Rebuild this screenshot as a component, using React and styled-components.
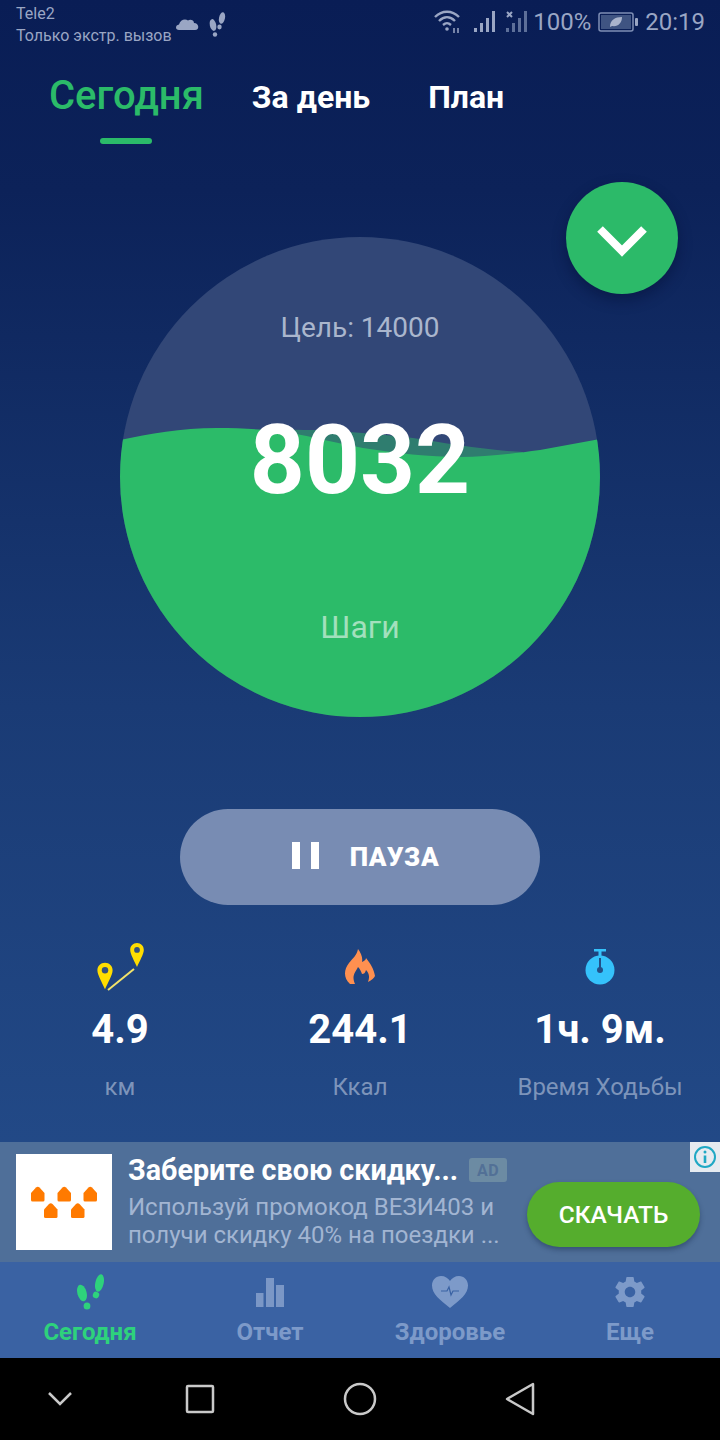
import React from 'react'
import styled, { createGlobalStyle } from 'styled-components'

const GlobalStyle = createGlobalStyle`
  html, body { margin: 0; padding: 0; background: #000; }
  * { box-sizing: border-box; }
  body { font-family: Roboto, "Noto Sans", sans-serif; }
`

const Page = styled.div`
  width: 720px;
  height: 1440px;
  display: flex;
  flex-direction: column;
  overflow: hidden;
`

const Screen = styled.div`
  flex: 1;
  display: flex;
  flex-direction: column;
  background: linear-gradient(180deg, #091d55 0%, #0c2259 14%, #1a3b75 52%, #26508f 100%);
`

const StatusBar = styled.div`
  height: 46px;
  padding: 3px 15px 0 16px;
  display: flex;
  justify-content: space-between;
  color: #9aa6c4;
`

const CarrierGroup = styled.div`
  display: flex;
  align-items: flex-start;
`

const Carrier = styled.div`
  font-size: 16px;
  line-height: 22px;
  white-space: nowrap;
`

const StatusIcons = styled.div`
  display: flex;
  align-items: center;
  gap: 3px;
  height: 44px;
  margin-top: -3px;
  font-size: 24px;
  white-space: nowrap;
`

const Tabs = styled.div`
  display: flex;
  align-items: flex-start;
  padding-left: 49px;
  height: 104px;
`

const Tab = styled.div`
  display: flex;
  flex-direction: column;
  align-items: center;
  margin-left: ${p => p.$gap || 0}px;
  margin-top: ${p => (p.$active ? 30 : 35)}px;
  font-size: ${p => (p.$active ? 40 : 32)}px;
  line-height: 1;
  font-weight: ${p => (p.$active ? 500 : 700)};
  color: ${p => (p.$active ? '#2bbb69' : '#fff')};
`

const TabMarker = styled.div`
  width: 52px;
  height: 6px;
  margin-top: 22px;
  border-radius: 3px;
  background: #2bbb69;
`

const Hero = styled.div`
  position: relative;
  display: flex;
  justify-content: center;
  padding-top: 87px;
`

const Dial = styled.div`
  position: relative;
  width: 480px;
  height: 480px;
  border-radius: 50%;
  overflow: hidden;
  background: #324777;
  display: flex;
  flex-direction: column;
  align-items: center;
`

const WaveLayer = styled.svg`
  position: absolute;
  left: 0;
  top: 0;
`

const Goal = styled.div`
  position: relative;
  margin-top: 73px;
  font-size: 28px;
  line-height: 36px;
  color: #aab6cd;
`

const StepCount = styled.div`
  position: relative;
  margin-top: 58px;
  font-size: 96px;
  line-height: 112px;
  font-weight: 700;
  color: #fff;
`

const StepLabel = styled.div`
  position: relative;
  margin-top: 91px;
  font-size: 32px;
  line-height: 40px;
  color: #a2e0bd;
`

const CollapseButton = styled.div`
  position: absolute;
  right: 42px;
  top: 32px;
  width: 112px;
  height: 112px;
  padding-top: 5px;
  border-radius: 50%;
  background: #2cba69;
  box-shadow: 0 6px 14px rgba(4, 14, 50, 0.45);
  display: flex;
  align-items: center;
  justify-content: center;
`

const PauseButton = styled.div`
  align-self: center;
  width: 360px;
  height: 96px;
  margin-top: 92px;
  padding-left: 11px;
  border-radius: 48px;
  background: #788cb3;
  display: flex;
  align-items: center;
  justify-content: center;
  gap: 31px;
  color: #fff;
  font-size: 26px;
  font-weight: 900;
  letter-spacing: 0.6px;
`

const PauseBars = styled.div`
  display: flex;
  gap: 11px;
  margin-top: -3px;
`

const PauseBar = styled.div`
  width: 8px;
  height: 27px;
  background: #fff;
`

const Stats = styled.div`
  display: grid;
  grid-template-columns: repeat(3, 240px);
  margin-top: 34px;
`

const Stat = styled.div`
  display: flex;
  flex-direction: column;
  align-items: center;
`

const StatIcon = styled.div`
  height: 56px;
  display: flex;
  align-items: center;
  justify-content: center;
`

const StatValue = styled.div`
  margin-top: 11px;
  font-size: 40px;
  line-height: 48px;
  font-weight: 700;
  color: #fff;
`

const StatLabel = styled.div`
  margin-top: 18px;
  font-size: 24px;
  line-height: 30px;
  color: #7d94ba;
  white-space: nowrap;
`

const AdBanner = styled.div`
  position: relative;
  height: 120px;
  margin-top: auto;
  padding: 12px 20px 12px 16px;
  display: flex;
  align-items: center;
  background: #4f6f99;
`

const AdImage = styled.div`
  width: 96px;
  height: 96px;
  flex: none;
  background: #fff;
  display: flex;
  align-items: center;
  justify-content: center;
`

const AdText = styled.div`
  flex: 1;
  margin-left: 16px;
  min-width: 0;
`

const AdTitleRow = styled.div`
  display: flex;
  align-items: center;
  gap: 11px;
  height: 34px;
  margin-top: -2px;
`

const AdTitle = styled.div`
  font-size: 28.7px;
  font-weight: 700;
  color: #fff;
  white-space: nowrap;
`

const AdBadge = styled.div`
  width: 38px;
  height: 24px;
  border-radius: 3px;
  background: #6c8ba3;
  color: #527096;
  font-size: 16px;
  font-weight: 700;
  letter-spacing: 0.5px;
  display: flex;
  align-items: center;
  justify-content: center;
`

const AdBody = styled.div`
  margin-top: 6px;
  font-size: 24px;
  line-height: 28px;
  color: #a2b5d2;
  white-space: nowrap;
`

const AdButton = styled.div`
  flex: none;
  width: 173px;
  height: 65px;
  margin-top: 24px;
  border-radius: 33px;
  background: #55ad2d;
  box-shadow: 0 3px 5px rgba(20, 40, 70, 0.4);
  color: #fff;
  font-size: 24.5px;
  font-weight: 500;
  display: flex;
  align-items: center;
  justify-content: center;
`

const AdInfo = styled.div`
  position: absolute;
  right: 0;
  top: 0;
  width: 30px;
  height: 30px;
  background: #e6ebf0;
  display: flex;
  align-items: center;
  justify-content: center;
`

const BottomTabs = styled.div`
  height: 96px;
  display: grid;
  grid-template-columns: repeat(4, 180px);
  background: #3a62a3;
`

const BottomTab = styled.div`
  display: flex;
  flex-direction: column;
  align-items: center;
  padding-top: 9px;
  color: ${p => (p.$active ? '#2ed27c' : '#7d9ac9')};
  font-size: 24px;
  font-weight: 700;
`

const BottomIcon = styled.div`
  height: 42px;
  display: flex;
  align-items: center;
  justify-content: center;
`

const BottomLabel = styled.div`
  margin-top: 5px;
  line-height: 28px;
`

const SystemNav = styled.div`
  height: 82px;
  background: #000;
  display: grid;
  grid-template-columns: 120px 160px 160px 160px;
  align-items: center;
  justify-items: center;
`

const HOUSE = 'M0 7 L5 1.500 Q6.750 0 8.500 1.500 L13.500 7 L13.500 14 Q13.500 15.500 12 15.500 L1.500 15.500 Q0 15.500 0 14 Z'

const House = ({ x, y }) => <path d={HOUSE} transform={`translate(${x} ${y})`} />

const Footprints = ({ color }) => (
  <svg width="27" height="36" viewBox="0 0 27 36" fill={color}>
    <ellipse cx="5" cy="19" rx="4.600" ry="8.500" transform="rotate(-15 5 19)" />
    <ellipse cx="10" cy="32" rx="3.400" ry="3.500" />
    <ellipse cx="22.500" cy="9" rx="4.200" ry="9" transform="rotate(12 22.500 9)" />
    <ellipse cx="19" cy="21" rx="3.200" ry="3.300" transform="rotate(20 19 21)" />
  </svg>
)

const Pin = ({ x, y, scale = 1 }) => (
  <g transform={`translate(${x} ${y}) scale(${scale})`}>
    <path d="M0 -14 C-4.600 -14 -8 -10.500 -8 -6 C-8 -1 -3 7 0 14 C3 7 8 -1 8 -6 C8 -10.500 4.600 -14 0 -14 Z" fill="#ffdd00" />
    <circle cx="0" cy="-6" r="3.400" fill="#34507c" />
  </g>
)

const App = () => (
  <Page>
    <GlobalStyle />
    <Screen>
      <StatusBar>
        <CarrierGroup>
          <Carrier>
            Tele2
            <br />
            Только экстр. вызов
          </Carrier>
          <svg width="62" height="40" viewBox="0 0 62 40" fill="#9aa6c4">
            <path d="M7 27 C3 27 3 22 7 21.500 C8 17 13 15 16 17.500 C18 16 22 17 22 20 C27 20 28 27 23 27 Z" />
            <ellipse cx="41" cy="22" rx="3.200" ry="6" transform="rotate(-12 41 22)" />
            <ellipse cx="43" cy="31.500" rx="2.200" ry="2.200" />
            <ellipse cx="50" cy="15" rx="3" ry="5.800" transform="rotate(12 50 15)" />
            <ellipse cx="47.500" cy="24" rx="2.200" ry="2.400" />
          </svg>
        </CarrierGroup>
        <StatusIcons>
          <svg width="30" height="26" viewBox="0 0 30 26" fill="none" stroke="#9aa6c4" strokeWidth="2.400">
            <path d="M2 8 C9 1 19 1 26 8" />
            <path d="M6 12 C11 7 17 7 22 12" />
            <path d="M10 16 C13 13.500 15 13.500 18 16" />
            <circle cx="14" cy="20" r="1.800" fill="#9aa6c4" stroke="none" />
            <path d="M21 19 L21 24 M25 19 L25 24" strokeWidth="1.500" />
          </svg>
          <svg width="64" height="28" viewBox="0 0 64 28" fill="#9aa6c4">
            <rect x="8" y="20" width="3" height="4" />
            <rect x="14" y="15" width="3" height="9" />
            <rect x="20" y="10" width="3" height="14" />
            <rect x="26" y="3" width="3" height="21" />
            <path d="M41 4 L46 9 M46 4 L41 9" stroke="#9aa6c4" strokeWidth="2" />
            <g fill="#5d6f99">
              <rect x="40" y="20" width="3" height="4" />
              <rect x="46" y="15" width="3" height="9" />
              <rect x="52" y="10" width="3" height="14" />
              <rect x="58" y="3" width="3" height="21" />
            </g>
          </svg>
          <span>100%</span>
          <svg width="48" height="24" viewBox="0 0 48 24">
            <rect x="5" y="3" width="34" height="18" rx="2" fill="none" stroke="#7f8fb5" strokeWidth="1.500" />
            <rect x="7" y="5" width="30" height="14" fill="#3f5482" />
            <rect x="41" y="8" width="3" height="8" rx="1" fill="#9aa6c4" />
            <path d="M16 17 C16 10 21 7 28 7 C28 13 24 17 18 16 Z" fill="#aab4cc" />
          </svg>
          <span>20:19</span>
        </StatusIcons>
      </StatusBar>

      <Tabs>
        <Tab $active>
          Сегодня
          <TabMarker />
        </Tab>
        <Tab $gap={48}>За день</Tab>
        <Tab $gap={58}>План</Tab>
      </Tabs>

      <Hero>
        <Dial>
          <WaveLayer width="480" height="480" viewBox="0 0 480 480">
            <path d="M140 193 C 160 192 175 193 193 193 C 225 194 260 197 293 201 C 325 206 365 213 403 215 L 403 300 L 140 300 Z" fill="#2f7d6f" />
            <path d="M0 203 C 30 197 60 191 97 191 C 125 191 150 193 165 195 C 195 200 220 207 243 211 C 275 216 310 220 340 220 C 365 220 390 217 420 213 L 480 202 L 480 480 L 0 480 Z" fill="#2cbb69" />
          </WaveLayer>
          <Goal>Цель: 14000</Goal>
          <StepCount>8032</StepCount>
          <StepLabel>Шаги</StepLabel>
        </Dial>
        <CollapseButton>
          <svg width="50" height="34" viewBox="0 0 50 34" fill="none" stroke="#fff" strokeWidth="8">
            <path d="M3 5 L25 27 L47 5" />
          </svg>
        </CollapseButton>
      </Hero>

      <PauseButton>
        <PauseBars>
          <PauseBar />
          <PauseBar />
        </PauseBars>
        ПАУЗА
      </PauseButton>

      <Stats>
        <Stat>
          <StatIcon>
            <svg width="56" height="52" viewBox="0 0 56 52">
              <Pin x="13" y="35" scale="0.95" />
              <Pin x="45" y="14" scale="0.85" />
              <path d="M16 49 L42 28" stroke="#f2e36a" strokeWidth="2" />
            </svg>
          </StatIcon>
          <StatValue>4.9</StatValue>
          <StatLabel>км</StatLabel>
        </Stat>
        <Stat>
          <StatIcon>
            <svg width="32" height="36" viewBox="0 0 32 36">
              <path d="M6 35 C-1 29 0 20 5 14 C9 9 13 6 14 0 C17 4 19 9 18 13 C21 12 22 10 22 9 C26 14 30 20 31 27 C30 29 28 31 24 33 C26 28 25 24 22 21 C21 24 20 25 18 25 C17 22 16 20 14 18 C12 23 7 26 11 35 Z" fill="#ff9050" />
            </svg>
          </StatIcon>
          <StatValue>244.1</StatValue>
          <StatLabel>Ккал</StatLabel>
        </Stat>
        <Stat>
          <StatIcon>
            <svg width="30" height="36" viewBox="0 0 30 36">
              <rect x="9" y="0" width="12" height="2.500" fill="#35c2fb" />
              <rect x="13.500" y="2" width="3" height="5" fill="#35c2fb" />
              <circle cx="15" cy="21" r="14.500" fill="#35c2fb" />
              <rect x="14" y="9" width="2" height="11" fill="#235088" />
              <circle cx="15" cy="21" r="3" fill="#235088" />
            </svg>
          </StatIcon>
          <StatValue>1ч. 9м.</StatValue>
          <StatLabel>Время Ходьбы</StatLabel>
        </Stat>
      </Stats>

      <AdBanner>
        <AdImage>
          <svg width="66" height="32" viewBox="0 0 66 32" fill="#ff7a00">
            <House x="0" y="0" />
            <House x="26.500" y="0" />
            <House x="52.500" y="0" />
            <House x="13" y="16.500" />
            <House x="40" y="16.500" />
          </svg>
        </AdImage>
        <AdText>
          <AdTitleRow>
            <AdTitle>Заберите свою скидку...</AdTitle>
            <AdBadge>AD</AdBadge>
          </AdTitleRow>
          <AdBody>
            Используй промокод ВЕЗИ403 и
            <br />
            получи скидку 40% на поездки ...
          </AdBody>
        </AdText>
        <AdButton>СКАЧАТЬ</AdButton>
        <AdInfo>
          <svg width="24" height="24" viewBox="0 0 24 24" fill="none" stroke="#1fa8c4" strokeWidth="2">
            <circle cx="12" cy="12" r="10" />
            <path d="M12 10.500 L12 18" strokeWidth="2.600" />
            <circle cx="12" cy="7" r="1.500" fill="#1fa8c4" stroke="none" />
          </svg>
        </AdInfo>
      </AdBanner>

      <BottomTabs>
        <BottomTab $active>
          <BottomIcon>
            <Footprints color="#2ed27c" />
          </BottomIcon>
          <BottomLabel>Сегодня</BottomLabel>
        </BottomTab>
        <BottomTab>
          <BottomIcon>
            <svg width="28" height="29" viewBox="0 0 28 29" fill="#7b97c6">
              <rect x="0" y="15" width="7.500" height="14" />
              <rect x="10" y="0" width="8" height="29" />
              <rect x="20" y="7" width="8" height="22" />
            </svg>
          </BottomIcon>
          <BottomLabel>Отчет</BottomLabel>
        </BottomTab>
        <BottomTab>
          <BottomIcon>
            <svg width="36" height="32" viewBox="0 0 36 32">
              <path d="M18 32 C8 24 0 18 0 9.500 C0 4 4 0 9 0 C13 0 16 2 18 5 C20 2 23 0 27 0 C32 0 36 4 36 9.500 C36 18 28 24 18 32 Z" fill="#7d9ac9" />
              <path d="M9 15 L15 15 L17 11 L19 19 L21 15 L27 15" fill="none" stroke="#3a62a3" strokeWidth="1.200" />
            </svg>
          </BottomIcon>
          <BottomLabel>Здоровье</BottomLabel>
        </BottomTab>
        <BottomTab>
          <BottomIcon>
            <svg width="36" height="36" viewBox="0 0 24 24" fill="#7d9ac9">
              <path d="M19.430 12.980c.04-.32.070-.64.070-.98s-.03-.66-.07-.98l2.110-1.650c.19-.15.240-.42.120-.64l-2-3.460c-.12-.22-.39-.3-.61-.22l-2.490 1c-.52-.4-1.080-.73-1.690-.98l-.38-2.650C14.460 2.180 14.250 2 14 2h-4c-.25 0-.46.180-.49.420l-.38 2.650c-.61.250-1.170.59-1.690.98l-2.490-1c-.23-.09-.49 0-.61.220l-2 3.460c-.13.220-.07.490.12.640l2.110 1.650c-.04.320-.07.650-.07.980s.03.660.07.980l-2.110 1.650c-.19.150-.24.420-.12.640l2 3.460c.12.220.39.300.61.220l2.490-1c.52.400 1.080.730 1.690.980l.38 2.650c.03.240.24.420.49.420h4c.25 0 .46-.18.49-.42l.38-2.650c.61-.25 1.170-.59 1.690-.98l2.490 1c.23.090.49 0 .61-.22l2-3.460c.12-.22.070-.49-.12-.64l-2.110-1.650zM12 15.500c-1.930 0-3.500-1.570-3.500-3.500s1.570-3.500 3.500-3.500 3.500 1.570 3.500 3.500-1.570 3.500-3.500 3.500z" />
            </svg>
          </BottomIcon>
          <BottomLabel>Еще</BottomLabel>
        </BottomTab>
      </BottomTabs>
    </Screen>

    <SystemNav>
      <svg width="30" height="30" viewBox="0 0 30 30" fill="none" stroke="#c9c9c9" strokeWidth="2.500">
        <path d="M4 9 L15 20 L26 9" />
      </svg>
      <svg width="30" height="30" viewBox="0 0 30 30" fill="none" stroke="#c9c9c9" strokeWidth="2.500">
        <rect x="2" y="2" width="26" height="26" rx="1" />
      </svg>
      <svg width="34" height="34" viewBox="0 0 34 34" fill="none" stroke="#c9c9c9" strokeWidth="2.500">
        <circle cx="17" cy="17" r="15" />
      </svg>
      <svg width="32" height="34" viewBox="0 0 32 34" fill="none" stroke="#c9c9c9" strokeWidth="2.500" strokeLinejoin="round">
        <path d="M29 2 L29 32 L3 17 Z" />
      </svg>
    </SystemNav>
  </Page>
)

export default App
